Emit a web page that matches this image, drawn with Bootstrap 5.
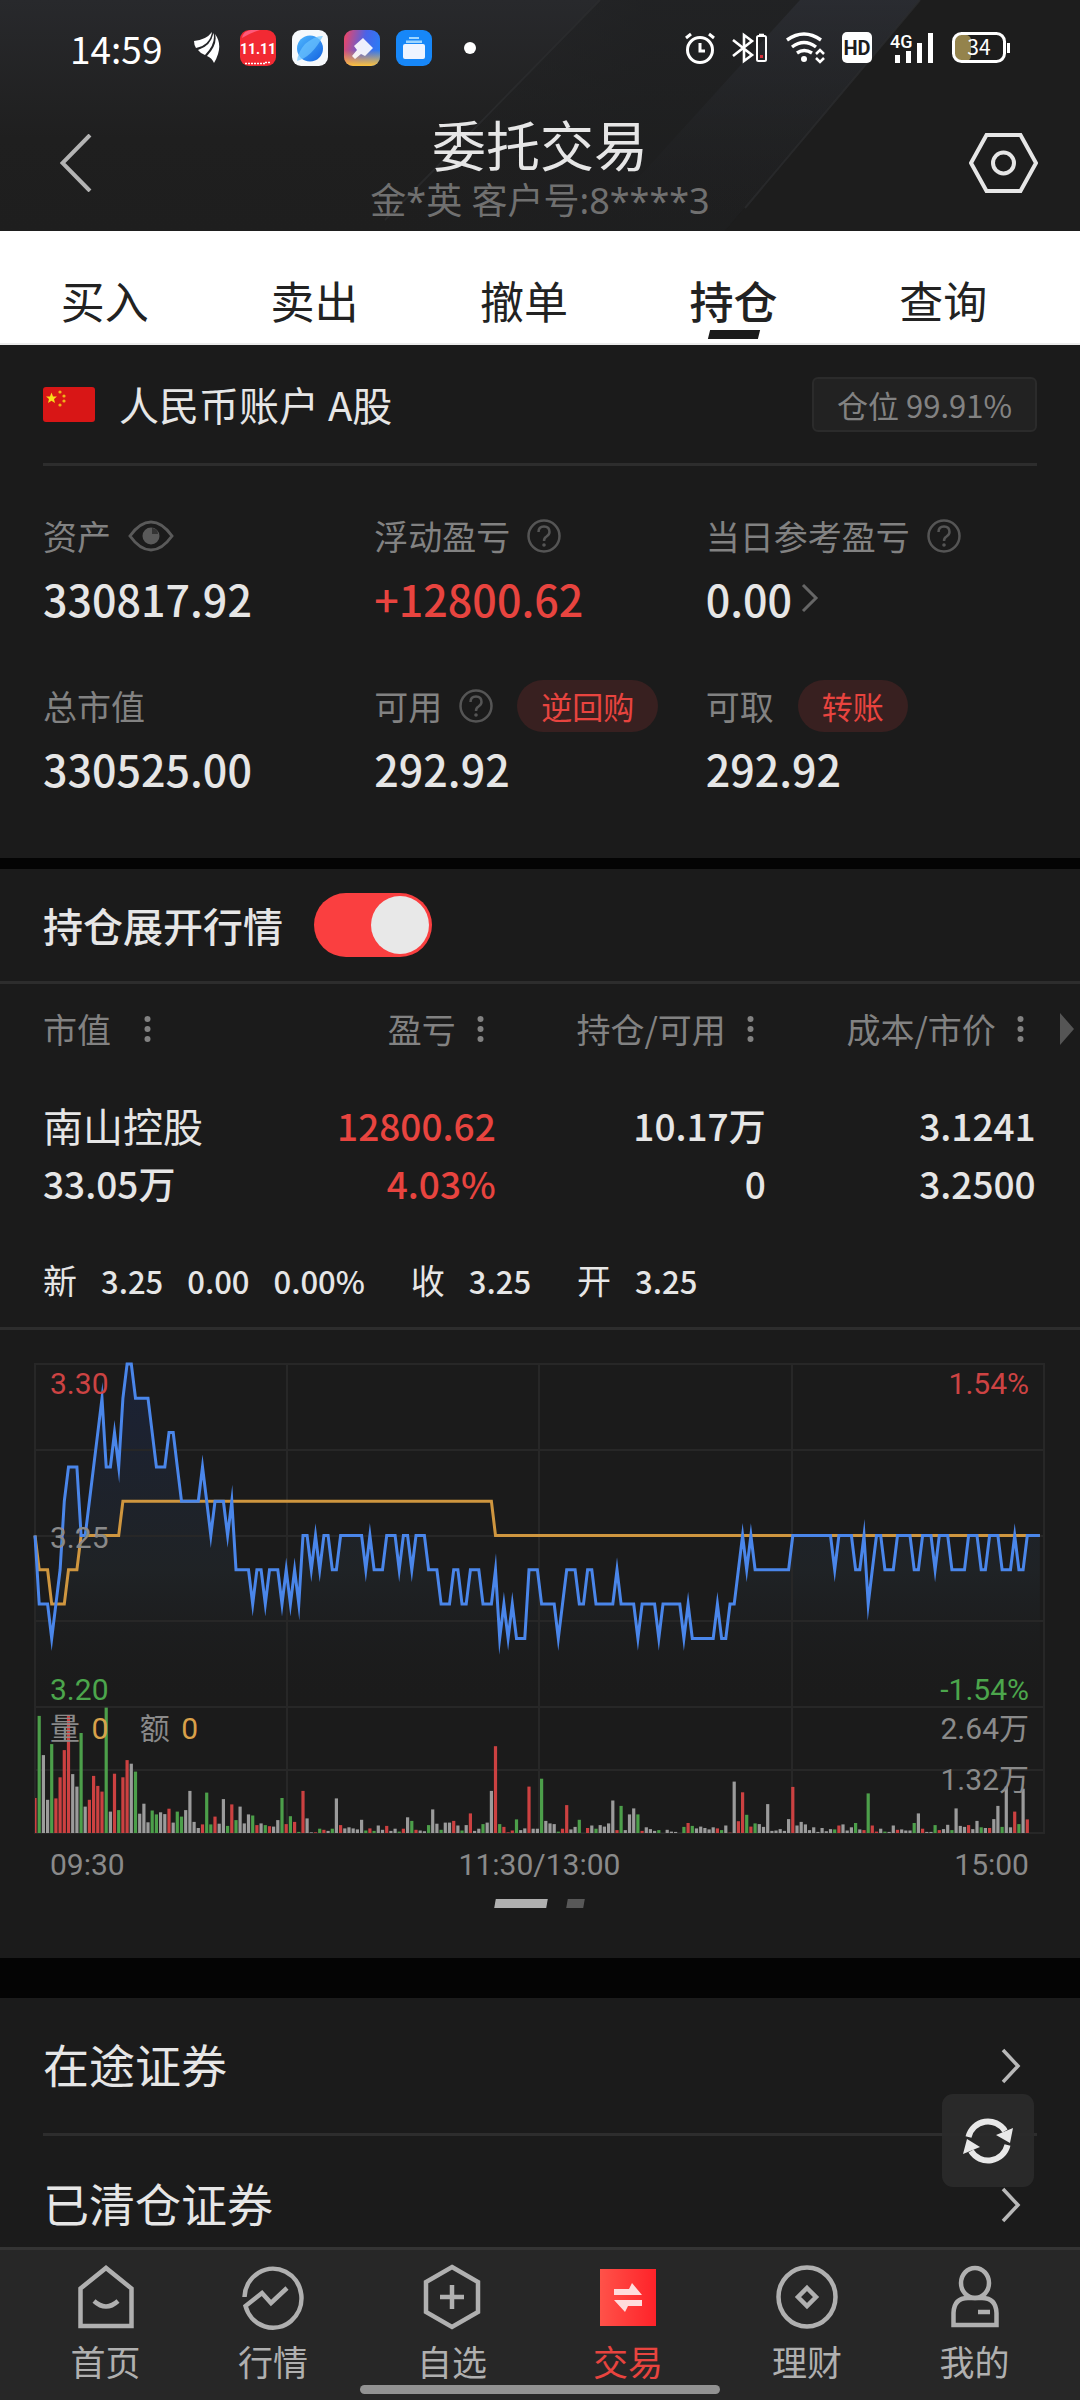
<!DOCTYPE html>
<html lang="zh-CN">
<head>
<meta charset="utf-8">
<meta name="viewport" content="width=device-width, initial-scale=1">
<title>委托交易</title>
<link href="https://cdn.jsdelivr.net/npm/bootstrap@5.3.0/dist/css/bootstrap.min.css" rel="stylesheet">
<style>
:root{--panel:#1b1b1b;--line:#2d2d2d;--txt:#e6e6e6;--dim:#828282;--up:#e8443f;--down:#4ca64c;--gut:43px}
body{background:#040404;color:var(--txt);font-family:"Noto Sans CJK SC",sans-serif;font-size:34px;line-height:52px;padding-bottom:127px}
svg{display:block;flex:none}
a{color:inherit;text-decoration:none}
button{background:none;border:0;padding:0;color:inherit}
.panel{background:var(--panel)}
.gutter{padding-left:var(--gut);padding-right:var(--gut)}
.dim{color:var(--dim)}
.up{color:var(--up)}
.top-area{background:linear-gradient(#28292c,#1f1f1f 60%,#1e1e1e)}
.top-art{position:absolute;inset:0;width:100%;height:100%}
.status{height:95px;padding-left:70px;padding-right:69px;font-size:37px;color:#fff}
.notif{margin-left:32px;gap:16px}
.sys{gap:17px}
.title-bar{height:136px;padding:0 42px}
.title-bar button{width:69px}
.back svg{margin-left:18px}
.title-block{padding-top:16px}
.title-bar h1{font-size:54px;line-height:60px;font-weight:400;margin:0}
.title-bar p{font-family:"Noto Sans","Noto Sans CJK SC",sans-serif;font-size:36px;line-height:54px;color:#707070;margin:0}
.tabs{height:114px;padding-right:32px;padding-top:41px;border-bottom:2px solid #ececec;font-size:44px;line-height:56px;color:#222}
.tabs a.active{font-weight:500}
.tabs a.active::after{content:"";display:block;width:50px;height:9px;margin:2px auto 0;background:#1b1b1b;transform:skewX(-14deg)}
.acct{height:121px;border-bottom:3px solid var(--line);font-size:40px;gap:24px}
.holding-rate{font-size:31px;line-height:51px;border:2px solid #2b2b2b;background:#222;border-radius:6px;padding:0 23px}
.stats{padding-top:44px;padding-bottom:60px;row-gap:52px}
.stat-label{height:52px;gap:17px}
.stat-value{font-size:43px;font-weight:500;line-height:60px;margin-top:6px;gap:9px}
.pill-btn{background:#382020;color:var(--up);border-radius:26px;font-size:31px;line-height:52px;padding:0 24px;margin-left:7px}
.band-s{height:11px}
.band-l{height:40px}
.toggle-row{height:115px;border-bottom:3px solid var(--line);font-size:40px;font-weight:500;gap:31px}
.toggle-row .form-check-input{width:118px;height:64px;margin:0;border:0;background-color:#fa3f40;border-radius:32px;background-size:64px 64px;
 background-image:url("data:image/svg+xml,%3csvg xmlns='http://www.w3.org/2000/svg' viewBox='0 0 64 64'%3e%3ccircle cx='32' cy='32' r='29' fill='%23e8e8e8'/%3e%3c/svg%3e")!important}
.hold{width:100%;table-layout:fixed;text-align:right}
.hold th{font-weight:400;color:var(--dim);height:90px;padding:0}
.hold td{font-size:37px;font-weight:500;line-height:58px;padding:0}
.hold th:first-child,.hold td:first-child{text-align:left;padding-left:var(--gut)}
.hold .th-in{display:inline-flex;align-items:center;gap:21px;padding-right:12px}
.hold .th-in.wide{gap:33px}
.hold .stock{font-size:40px;font-weight:400}
.hold .first td{padding-top:22px}
.quote{font-size:31px;height:118px;padding-top:22px;border-bottom:3px solid var(--line);gap:46px}
.quote b{font-weight:500;margin-left:24px}
.quote span{font-size:34px}
.chart-wrap{padding:34px 36px 50px 35px;font-family:Roboto,"Noto Sans CJK SC",sans-serif;font-size:30px;line-height:40px;color:#8a8a8a}
.plot{height:469px}
.plot svg{width:100%;height:469px;overflow:visible}
.plot svg *{vector-effect:non-scaling-stroke}
.tag{position:absolute}
.tag-l{left:15px}.tag-r{right:15px}
.lv1{top:0}.lv2{top:154px}.lv3{top:306px}.lv4{top:345px}.lv5{top:396px}
.hi{color:#cd4343}.lo{color:var(--down)}.or{color:#d8a04a}
.times{padding:12px 15px 14px}
.pager{height:9px;gap:20px;transform:skewX(-10deg)}
.pager i{width:17px;height:9px;background:#585858}
.pager i.on{width:52px;background:#b0b0b0}
.link-row{height:138px;font-size:46px;padding-right:16px;border-bottom:3px solid var(--line)}
.link-row span{padding-bottom:6px}
.refresh{position:fixed;right:46px;bottom:213px;width:92px;height:93px;border-radius:11px;background:rgba(42,42,42,.92);z-index:1040}
.dock{height:153px;background:#272727;border-top:3px solid #343434;padding:0 29px;font-size:35px;line-height:52px;color:#b0b0b0;align-items:stretch}
.dock a{display:flex;flex-direction:column;align-items:center;padding-top:14px}
.dock .w1{flex:153 1 0}.dock .w2{flex:182 1 0}.dock .w3{flex:176 1 0}
.dock svg{width:66px;height:66px;margin-bottom:5px}
.home-bar{position:absolute;left:33.3%;width:33.4%;height:9px;bottom:6px;border-radius:5px;background:#929292}
</style>
</head>
<body>
<header class="top-area position-relative">
  <svg class="top-art" viewBox="0 0 1080 231" preserveAspectRatio="none">
    <defs><linearGradient id="sheen" x1="0" y1="0" x2="0" y2="1"><stop offset="0" stop-color="#2c2e34" stop-opacity=".8"/><stop offset="1" stop-color="#222325" stop-opacity="0"/></linearGradient><linearGradient id="side" x1="0" y1="0" x2="1" y2="0"><stop offset="0" stop-color="#1e1f20" stop-opacity="0"/><stop offset=".5" stop-color="#1e1f20" stop-opacity=".7"/></linearGradient></defs>
    <path d="M600 0H920L735 231H370Z" fill="url(#side)"/>
    <path d="M800 0H920L735 220H600Z" fill="url(#sheen)"/>
    <path d="M920 0H1080V231H725Z" fill="#1d1d1d"/>
    <path d="M920 0L745 208M600 0L385 220" stroke="#2d2e30" stroke-width="2" opacity=".7"/>
  </svg>
  <div class="position-relative">
    <div class="status d-flex align-items-center">
      <span>14:59</span>
      <div class="notif d-flex align-items-center">
        <svg class="me-1" width="26" height="32" viewBox="0 0 26 32" fill="#fff"><path d="M0 9Q12 8 18 0Q16 13 2 16Q0 13 0 9ZM4 18Q17 14 19.500 1Q22 12 11 23Q7 22 4 18ZM13 24Q24 12 21 2Q30 14 20 31Q18 26 13 24Z"/></svg>
        <svg width="36" height="36" viewBox="0 0 36 36"><rect width="36" height="36" rx="9" fill="#f22a33"/><path d="M2 8Q3 1 11 0H20Q10 3 2 8Z" fill="#ff5a7a"/><text x="18" y="24" text-anchor="middle" font-size="14" font-weight="700" fill="#fff" font-family="Roboto">11.11</text><path d="M5 33.500H25M25 32.500H31" stroke="#fff" stroke-width="1.500" stroke-dasharray="2 1"/></svg>
        <svg width="36" height="36" viewBox="0 0 36 36"><defs><linearGradient id="gl" x1="0" y1="0" x2="1" y2="1"><stop offset="0" stop-color="#4fb8ff"/><stop offset="1" stop-color="#1463e0"/></linearGradient></defs><rect width="36" height="36" rx="9" fill="#f6f9fc"/><circle cx="18" cy="18.500" r="13" fill="url(#gl)"/><path d="M5 31Q20 27 31 6Q24 5 13 14Q6 22 5 31Z" fill="#6cc4ff" opacity=".7"/></svg>
        <svg width="36" height="36" viewBox="0 0 36 36"><defs><linearGradient id="br" x1="0" y1=".3" x2="1" y2=".5"><stop offset="0" stop-color="#e5466c"/><stop offset=".55" stop-color="#4a63e8"/><stop offset="1" stop-color="#2a7cf5"/></linearGradient><linearGradient id="br2" x1="0" y1="0" x2="0" y2="1"><stop offset=".55" stop-color="#ffb43a" stop-opacity="0"/><stop offset="1" stop-color="#ffc23a"/></linearGradient></defs><rect width="36" height="36" rx="9" fill="url(#br)"/><rect width="36" height="36" rx="9" fill="url(#br2)"/><path d="M19 8L29 18L21 26L17 24L11 29L8 26L13 20L10 16Z" fill="#fff" opacity=".9"/></svg>
        <svg width="36" height="36" viewBox="0 0 36 36"><rect width="36" height="36" rx="9" fill="#1787f8"/><path d="M13 7H23V9H13ZM10 10.500H26V13H10Z" fill="#9ed6ff"/><rect x="7" y="14" width="22" height="15" rx="2" fill="#eef4ff"/></svg>
        <svg class="ms-3" width="12" height="12" viewBox="0 0 12 12"><circle cx="6" cy="6" r="6" fill="#fff"/></svg>
      </div>
      <div class="sys ms-auto d-flex align-items-center">
        <svg width="30" height="32" viewBox="0 0 30 32" fill="none" stroke="#fff" stroke-width="3"><circle cx="15" cy="18" r="12.500"/><path d="M15 11V19H20M1 6L6 2M29 6L24 2"/></svg>
        <svg width="36" height="32" viewBox="0 0 36 32" fill="none" stroke="#fff" stroke-width="2.600"><path d="M1 8L20 23L12 29V3L20 9L1 24"/><rect x="25" y="4" width="9" height="25" rx="1.500" stroke-width="2"/><path d="M27 3H32" /><rect x="28" y="23" width="3" height="3" fill="#d8303a" stroke="none"/></svg>
        <svg width="40" height="32" viewBox="0 0 40 32" fill="none" stroke="#fff" stroke-width="3.400"><path d="M2 8Q19 -4 36 8M7 15Q19 6 31 15M12 21Q19 16 27 21"/><circle cx="19" cy="27" r="3" fill="#fff" stroke="none"/><path d="M31 22L35 18L39 22M31 26L35 30L39 26" stroke-width="2.500"/></svg>
        <svg width="30" height="31" viewBox="0 0 30 31"><rect width="30" height="31" rx="5" fill="#fff"/><text x="15" y="23" text-anchor="middle" font-size="20" font-weight="700" fill="#1d1d1d" font-family="Roboto">HD</text></svg>
        <svg class="overflow-visible" width="46" height="32" viewBox="0 0 46 32"><text x="1" y="16" font-size="18" fill="#fff" font-family="Roboto" font-weight="500">4G</text><path d="M8.500 31V23M19.500 31V19M30.500 31V11M41.500 31V1" stroke="#fff" stroke-width="5"/></svg>
        <svg width="59" height="32" viewBox="0 0 59 32"><rect x="3" y="3" width="16" height="26" rx="5" fill="#94834c"/><rect x="1.500" y="1.500" width="51" height="28" rx="8" fill="none" stroke="#fff" stroke-width="3"/><path d="M56.500 11V21" stroke="#fff" stroke-width="3"/><text x="27" y="23" text-anchor="middle" font-size="21" fill="#fff" font-family="Noto Sans CJK SC">34</text></svg>
      </div>
    </div>
    <div class="title-bar d-flex align-items-center justify-content-between">
      <button type="button" class="back" aria-label="返回"><svg width="32" height="58" viewBox="0 0 32 58" fill="none" stroke="#b4b4b4" stroke-width="4"><path d="M30 1L2.500 29L30 57"/></svg></button>
      <div class="title-block text-center"><h1>委托交易</h1><p>金*英 客户号:8****3</p></div>
      <button type="button" aria-label="设置"><svg width="69" height="60" viewBox="0 0 69 60" fill="none" stroke="#e6e6e6" stroke-width="4"><path d="M17.500 2H51.500L67 30L51.500 58H17.500L2 30Z"/><circle cx="34.500" cy="30" r="10.500"/></svg></button>
    </div>
  </div>
</header>

<nav class="tabs bg-white d-flex text-center">
  <a class="col" href="#">买入</a><a class="col" href="#">卖出</a><a class="col" href="#">撤单</a><a class="col active" aria-current="page" href="#">持仓</a><a class="col" href="#">查询</a>
</nav>

<main>
<section class="panel gutter">
  <div class="acct d-flex align-items-center">
    <svg width="52" height="35" viewBox="0 0 52 35"><rect width="52" height="35" rx="3" fill="#d81616"/><path d="M8.500 5.500L10 9.500H14L11 12L12 16L8.500 13.700L5 16L6 12L3 9.500H7Z" fill="#f7dd1a"/><g fill="#f0b01a"><circle cx="17" cy="5" r="1.600"/><circle cx="21" cy="9" r="1.600"/><circle cx="21" cy="14" r="1.600"/><circle cx="17" cy="18" r="1.600"/></g></svg>
    <span>人民币账户 A股</span>
    <span class="holding-rate dim ms-auto">仓位 99.91%</span>
  </div>
  <div class="row gx-0 stats">
    <div class="col-4"><div class="stat-label dim d-flex align-items-center"><span>资产</span><button type="button" aria-label="显示资产"><svg width="46" height="32" viewBox="0 0 46 32"><path d="M2 16Q12 2 23 2T44 16Q34 30 23 30T2 16Z" fill="none" stroke="#5a5a5a" stroke-width="3"/><circle cx="23" cy="16" r="8.500" fill="#5a5a5a"/><path d="M24 8Q30 9 30 14H24Z" fill="#1b1b1b" opacity=".6"/></svg></button></div><div class="stat-value">330817.92</div></div>
    <div class="col-4"><div class="stat-label dim d-flex align-items-center"><span>浮动盈亏</span><svg width="34" height="34"><use href="#help"/></svg></div><div class="stat-value up">+12800.62</div></div>
    <div class="col-4"><div class="stat-label dim d-flex align-items-center"><span>当日参考盈亏</span><svg width="34" height="34"><use href="#help"/></svg></div><div class="stat-value d-flex align-items-center"><span>0.00</span><svg width="18" height="30" viewBox="0 0 18 30" fill="none" stroke="#666" stroke-width="3"><path d="M2 2L15 15L2 28"/></svg></div></div>
    <div class="col-4"><div class="stat-label dim d-flex align-items-center"><span>总市值</span></div><div class="stat-value">330525.00</div></div>
    <div class="col-4"><div class="stat-label dim d-flex align-items-center"><span>可用</span><svg width="34" height="34"><use href="#help"/></svg><button type="button" class="pill-btn">逆回购</button></div><div class="stat-value">292.92</div></div>
    <div class="col-4"><div class="stat-label dim d-flex align-items-center"><span>可取</span><button type="button" class="pill-btn">转账</button></div><div class="stat-value">292.92</div></div>
  </div>
</section>
<div class="band-s"></div>

<section class="panel">
  <div class="toggle-row gutter d-flex align-items-center form-switch">
    <label for="expand">持仓展开行情</label>
    <input class="form-check-input" type="checkbox" role="switch" id="expand" checked>
  </div>
  <table class="hold">
    <colgroup><col style="width:20.900%"><col style="width:25%"><col style="width:25%"><col style="width:25%"><col style="width:4.100%"></colgroup>
    <thead><tr>
      <th scope="col"><span class="th-in wide">市值<svg width="7" height="28"><use href="#dots"/></svg></span></th>
      <th scope="col"><span class="th-in">盈亏<svg width="7" height="28"><use href="#dots"/></svg></span></th>
      <th scope="col"><span class="th-in">持仓/可用<svg width="7" height="28"><use href="#dots"/></svg></span></th>
      <th scope="col"><span class="th-in">成本/市价<svg width="7" height="28"><use href="#dots"/></svg></span></th>
      <td><svg class="ms-4" width="14" height="32" viewBox="0 0 14 32"><path d="M0 0L14 16L0 32Z" fill="#555"/></svg></td>
    </tr></thead>
    <tbody>
      <tr class="first"><td class="stock">南山控股</td><td class="up">12800.62</td><td>10.17万</td><td>3.1241</td><td></td></tr>
      <tr><td>33.05万</td><td class="up">4.03%</td><td>0</td><td>3.2500</td><td></td></tr>
    </tbody>
  </table>
  <div class="quote gutter d-flex align-items-center">
    <div><span>新</span><b>3.25</b><b>0.00</b><b>0.00%</b></div><div><span>收</span><b>3.25</b></div><div><span>开</span><b>3.25</b></div>
  </div>
  <div class="chart-wrap">
    <div class="plot position-relative">
      <svg id="chart" viewBox="0 0 1009 469" preserveAspectRatio="none">
        <defs><linearGradient id="area" x1="0" y1="0" x2="0" y2="1"><stop offset="0" stop-color="#1a2545" stop-opacity=".65"/><stop offset=".6" stop-color="#232a30" stop-opacity=".5"/><stop offset="1" stop-color="#1b1b1b" stop-opacity="0"/></linearGradient></defs>
        <path id="fill" fill="url(#area)"/>
        <path d="M0 0H1009V469H0ZM0 86H1009M0 172H1009M0 257H1009M0 343H1009M0 406H1009M252 0V469M504 0V469M757 0V469" fill="none" stroke="#272727" stroke-width="2"/>
        <g id="bars"></g>
        <polyline id="avg" fill="none" stroke="#cf963f" stroke-width="3" stroke-miterlimit="12"/>
        <polyline id="price" fill="none" stroke="#4a86ea" stroke-width="3" stroke-miterlimit="20"/>
      </svg>
      <span class="tag tag-l lv1 hi">3.30</span><span class="tag tag-l lv2">3.25</span><span class="tag tag-l lv3 lo">3.20</span>
      <span class="tag tag-l lv4">量 <span class="or ms-1 me-4">0</span> 额 <span class="or ms-1">0</span></span>
      <span class="tag tag-r lv1 hi">1.54%</span><span class="tag tag-r lv3 lo">-1.54%</span><span class="tag tag-r lv4">2.64万</span><span class="tag tag-r lv5">1.32万</span>
    </div>
    <div class="times d-flex justify-content-between"><span>09:30</span><span>11:30/13:00</span><span>15:00</span></div>
    <div class="pager d-flex justify-content-center"><i class="on"></i><i></i></div>
  </div>
</section>
<div class="band-l"></div>

<section class="panel gutter">
  <a class="link-row d-flex align-items-center justify-content-between" href="#"><span>在途证券</span><svg width="20" height="36"><use href="#next"/></svg></a>
  <a class="link-row d-flex align-items-center justify-content-between border-0" href="#"><span>已清仓证券</span><svg width="20" height="36"><use href="#next"/></svg></a>
</section>
</main>

<button type="button" class="refresh d-flex align-items-center justify-content-center" aria-label="刷新">
  <svg width="52" height="50" viewBox="0 0 52 50"><path d="M6.500 21A20 20 0 0 1 43 15M45.500 29A20 20 0 0 1 9 35" fill="none" stroke="#e8e8e8" stroke-width="6"/><path d="M51 12L48 27L34 19ZM1 38L5 23L18 31Z" fill="#e8e8e8"/></svg>
</button>

<nav class="dock navbar fixed-bottom flex-nowrap">
  <a class="w1" href="#"><svg viewBox="0 0 66 66" fill="none" stroke="#b0b0b0" stroke-width="4.500"><path d="M7.500 24.500L33 4L58.500 24.500V62H7.500Z"/><path d="M21 37Q33 48 45 37"/></svg>首页</a>
  <a class="w2" href="#"><svg viewBox="0 0 66 66" fill="none" stroke="#b0b0b0" stroke-width="4.500"><path d="M4.500 33A28.500 29.500 0 1 1 5.500 42L22 29L31 39L47 24"/></svg>行情</a>
  <a class="w3" href="#"><svg viewBox="0 0 66 66" fill="none" stroke="#b0b0b0" stroke-width="4.500"><path d="M33 3L59 18V48L33 63L7 48V18ZM33 21V45M21 33H45"/></svg>自选</a>
  <a class="w3 up" aria-current="page" href="#"><svg viewBox="0 0 66 66"><defs><linearGradient id="tr"><stop stop-color="#ff5249"/><stop offset="1" stop-color="#ff2229"/></linearGradient></defs><rect x="5" y="5" width="56" height="57" fill="url(#tr)"/><path d="M19 25H34L37 19L47 31H19ZM47 42H33L30 48L19 36H47Z" fill="#ffdcdc"/></svg>交易</a>
  <a class="w2" href="#"><svg viewBox="0 0 66 66" fill="none" stroke="#b0b0b0" stroke-width="4.500"><ellipse cx="33" cy="33" rx="28.500" ry="29.500"/><path d="M33 24L42 33L33 42L24 33Z"/></svg>理财</a>
  <a class="w1" href="#"><svg viewBox="0 0 66 66" fill="none" stroke="#b0b0b0" stroke-width="4.500"><ellipse cx="33" cy="19" rx="14" ry="15"/><path d="M11.500 61V49Q12 34 26 34H40Q54 34 54.500 49V61ZM36 48H48"/></svg>我的</a>
  <div class="home-bar"></div>
</nav>

<svg width="0" height="0" class="position-absolute">
  <symbol id="help" viewBox="0 0 34 34"><circle cx="17" cy="17" r="15.500" fill="none" stroke="#555" stroke-width="2.500"/><path d="M11.500 13Q11.500 7.500 17 7.500T22.500 13Q22.500 15.500 19.500 17.500Q17 19 17 22" fill="none" stroke="#555" stroke-width="2.500"/><circle cx="17" cy="26" r="1.800" fill="#555"/></symbol>
  <symbol id="dots" viewBox="0 0 7 28"><g fill="#828282"><circle cx="3.500" cy="4" r="3"/><circle cx="3.500" cy="14" r="3"/><circle cx="3.500" cy="24" r="3"/></g></symbol>
  <symbol id="next" viewBox="0 0 20 36"><path d="M2 2L17 18L2 34" fill="none" stroke="#b8b8b8" stroke-width="3.500"/></symbol>
</svg>

<script src="https://cdn.jsdelivr.net/npm/bootstrap@5.3.0/dist/js/bootstrap.bundle.min.js"></script>
<script>
// minute index : price in cents above 3.00
const price = "0:25 1:23 3:23 4:22 5:23 6:24 7:26 8:27 10:27 11:25 12:25 13:26 14:27 15:28 16:29 17:27 18:27 19:28 20:27 21:29 22:30 23:30 24:29 27:29 28:28 29:27 31:27 32:28 33:28 34:27 35:26 39:26 40:27 41:26 42:25 43:26 45:26 46:25 47:26 48:24 51:24 52:23 53:24 54:24 55:23 56:24 58:24 59:23 60:24 61:23 62:24 63:23 64:25 65:25 66:24 67:25 68:24 69:25 70:25 71:24 72:24 73:25 78:25 79:24 80:25 81:24 83:24 84:25 86:25 87:24 88:25 89:25 90:24 91:25 93:25 94:24 96:24 97:23 99:23 100:24 101:24 102:23 103:23 104:24 106:24 107:23 109:23 110:24 111:22 112:23 113:22 114:23 115:22 117:22 118:24 120:24 121:23 124:23 125:22 126:23 127:24 129:24 130:23 131:23 132:24 133:24 134:23 138:23 139:24 140:23 143:23 144:22 145:23 148:23 149:22 150:23 154:23 155:22 156:23 157:22 162:22 163:23 164:22 165:22 166:23 167:23 168:24 169:25 170:24 171:25 172:24 180:24 181:25 190:25 191:24 192:25 195:25 196:24 197:24 198:25 199:23 200:24 201:25 202:25 203:24 205:24 206:25 209:25 210:24 211:24 212:25 214:25 215:24 216:25 218:25 219:24 222:24 223:25 225:25 226:24 227:24 228:25 230:25 231:24 233:24 234:25 235:24 236:24 237:25 240:25";
const avg = "0:25 1:24 3:24 4:23 7:23 8:24 10:24 11:25 20:25 21:26 109:26 110:25 240:25";
// colour + volume, one entry per minute
const volume = "R98 G328 W218 W93 G249 R97 R156 R232 R328 W165 W130 G280 W74 R93 R160 R132 R116 G351 W60 R166 G64 R156 R204 W194 G172 W54 W82 W30 G63 G52 W58 W53 R68 W29 G60 G46 W64 W118 W31 W14 R24 G113 G24 R46 W26 W95 G20 R80 G36 W74 W27 W52 G49 R22 W27 G22 R19 W18 W36 G98 R25 G47 R31 G3 R118 W41 W2 R2 G12 R9 W6 G12 W97 R22 W13 W16 W13 W10 W37 G7 R13 G6 W21 W9 R20 W6 W12 G4 R12 W44 G34 R9 W7 W5 G22 W66 W26 G9 W29 W29 R34 W21 G7 W22 R55 W6 W12 G25 W29 W118 R243 G25 R17 R2 R7 G38 W8 W13 R130 W12 W12 G152 W34 W27 W25 G4 R12 R78 W10 W17 G37 W0 R14 W21 G12 W22 W18 W27 W91 R8 G76 W8 W52 W69 G52 R6 W16 W11 W6 G8 W0 W9 W4 W3 W0 G17 R28 G20 W13 W18 W14 W10 W16 R13 G8 W21 R1 W144 R33 R114 G51 R18 G27 W25 W17 W81 W6 W7 W11 W6 W39 R129 W21 W31 W24 W8 W16 W3 W14 W5 W11 G10 R21 W24 W7 W16 G28 W10 R8 G111 R21 R4 W12 G4 W3 W21 R9 W10 W7 W7 G28 W55 R12 W3 W3 G22 R8 W11 W23 G8 W69 W20 W17 R22 W11 W34 G16 W14 R14 W39 W76 G17 W130 W16 R60 G25 W124 R38";
const step = 1009 / 241, X = i => (i * step).toFixed(1), Y = p => ((30 - p) * 34.3).toFixed(1);
const pts = s => s.split(" ").map(t => { const [i, p] = t.split(":"); return X(i) + "," + Y(p); }).join(" ");
document.getElementById("price").setAttribute("points", pts(price));
document.getElementById("avg").setAttribute("points", pts(avg));
document.getElementById("fill").setAttribute("d", "M" + pts(price).replace(/ /g, "L") + "L" + X(240) + ",343L0,343Z");
const colours = { R: "#cc4141", G: "#4c9f4a", W: "#9b9b9b" };
document.getElementById("bars").innerHTML = volume.split(" ").map((t, i) => {
  const h = t.slice(1) / 2.8, x = Math.max(0, i * step - 1.6);
  return `<rect x="${x.toFixed(1)}" y="${(469 - h).toFixed(1)}" width="${i ? 3.2 : 1.6}" height="${h.toFixed(1)}" fill="${colours[t[0]]}"/>`;
}).join("");
</script>
</body>
</html>
